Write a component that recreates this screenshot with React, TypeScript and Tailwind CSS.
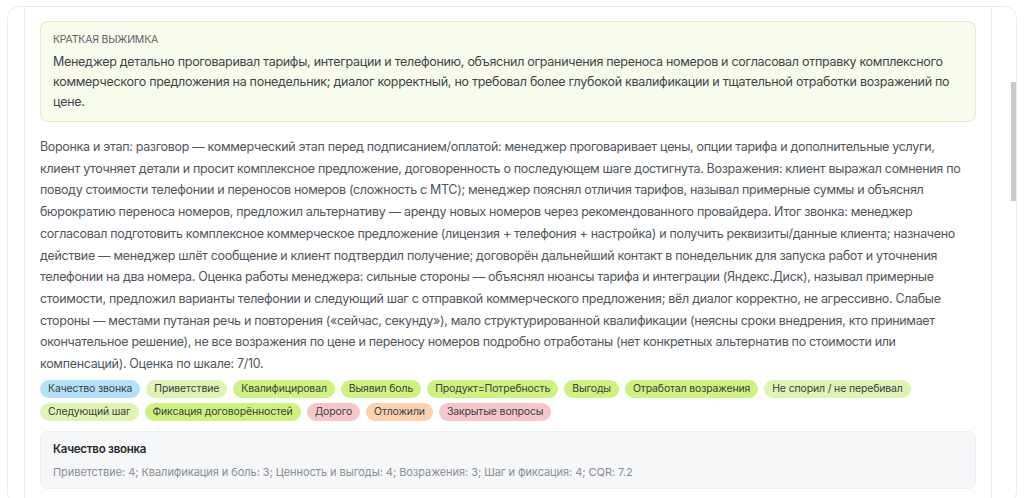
const summary = [
  'Менеджер детально проговаривал тарифы, интеграции и телефонию, объяснил ограничения переноса номеров и согласовал отправку комплексного',
  'коммерческого предложения на понедельник; диалог корректный, но требовал более глубокой квалификации и тщательной отработки возражений по',
  'цене.',
]

const body = [
  'Воронка и этап: разговор — коммерческий этап перед подписанием/оплатой: менеджер проговаривает цены, опции тарифа и дополнительные услуги,',
  'клиент уточняет детали и просит комплексное предложение, договоренность о последующем шаге достигнута. Возражения: клиент выражал сомнения по',
  'поводу стоимости телефонии и переносов номеров (сложность с МТС); менеджер пояснял отличия тарифов, называл примерные суммы и объяснял',
  'бюрократию переноса номеров, предложил альтернативу — аренду новых номеров через рекомендованного провайдера. Итог звонка: менеджер',
  'согласовал подготовить комплексное коммерческое предложение (лицензия + телефония + настройка) и получить реквизиты/данные клиента; назначено',
  'действие — менеджер шлёт сообщение и клиент подтвердил получение; договорён дальнейший контакт в понедельник для запуска работ и уточнения',
  'телефонии на два номера. Оценка работы менеджера: сильные стороны — объяснял нюансы тарифа и интеграции (Яндекс.Диск), называл примерные',
  'стоимости, предложил варианты телефонии и следующий шаг с отправкой коммерческого предложения; вёл диалог корректно, не агрессивно. Слабые',
  'стороны — местами путаная речь и повторения («сейчас, секунду»), мало структурированной квалификации (неясны сроки внедрения, кто принимает',
  'окончательное решение), не все возражения по цене и переносу номеров подробно отработаны (нет конкретных альтернатив по стоимости или',
  'компенсаций). Оценка по шкале: 7/10.',
]

const blue = 'bg-[#b5e0f9]'
const pale = 'bg-[#def3b4]'
const lime = 'bg-[#cdf27f]'
const red = 'bg-[#f7c6c9]'
const orange = 'bg-[#fbd2ad]'

const tags = [
  { label: 'Качество звонка', color: blue },
  { label: 'Приветствие', color: pale },
  { label: 'Квалифицировал', color: lime },
  { label: 'Выявил боль', color: lime },
  { label: 'Продукт=Потребность', color: lime },
  { label: 'Выгоды', color: lime },
  { label: 'Отработал возражения', color: lime },
  { label: 'Не спорил / не перебивал', color: pale },
  { label: 'Следующий шаг', color: pale },
  { label: 'Фиксация договорённостей', color: lime },
  { label: 'Дорого', color: red },
  { label: 'Отложили', color: orange },
  { label: 'Закрытые вопросы', color: red },
]

export default function App() {
  return (
    <div className="h-[498px] overflow-hidden bg-white pl-[7px] pr-[7px] pt-[6px] font-['Inter',sans-serif]">
      <div className="flex h-[498px] rounded-xl border border-[#e8eaee]">
        <div className="w-[16px] shrink-0" />
        <div className="w-[968px] shrink-0 border-x border-[#e8eaee] px-[15px] pt-[14px]">
          {/* Summary */}
          <div className="h-[101px] rounded-lg border border-[#e3ecc4] bg-[#f8fcec] px-3 pt-[10px]">
            <div className="text-[10.5px] leading-[16px] tracking-[-0.2px] text-[#5f6368]">КРАТКАЯ ВЫЖИМКА</div>
            <div className="mt-[4px] text-[12.5px] leading-[20px] tracking-[-0.29px] text-[#3f444a]">
              {summary.map((line) => (
                <div key={line} className="whitespace-nowrap">{line}</div>
              ))}
            </div>
          </div>

          {/* Body */}
          <div className="mt-[14px] text-[12.5px] leading-[21.72px] tracking-[-0.32px] text-[#51565c]">
            {body.map((line) => (
              <div key={line} className="whitespace-nowrap">{line}</div>
            ))}
          </div>

          {/* Tags */}
          <div className="mt-[5px] flex flex-wrap gap-x-[6px] gap-y-[5px]">
            {tags.map((tag) => (
              <span
                key={tag.label}
                className={`flex h-[18px] items-center rounded-full px-2 text-[10.5px] tracking-[-0.15px] text-[#3c4043] ${tag.color}`}
              >
                {tag.label}
              </span>
            ))}
          </div>

          {/* Call quality */}
          <div className="mt-[10px] h-[58px] rounded-lg border border-[#eceef1] bg-[#f6f7f9] px-3 pt-[9px]">
            <div className="text-[11.5px] font-semibold leading-[16px] tracking-[-0.25px] text-[#25282c]">Качество звонка</div>
            <div className="mt-[7px] text-[11px] leading-[16px] tracking-[-0.06px] text-[#8a8e93]">
              Приветствие: 4; Квалификация и боль: 3; Ценность и выгоды: 4; Возражения: 3; Шаг и фиксация: 4; CQR: 7.2
            </div>
          </div>
        </div>
        <div className="flex flex-1 justify-end pt-[75px]">
          <div className="h-[119px] w-[5px] bg-[#c9c9c9]" />
        </div>
      </div>
    </div>
  )
}
